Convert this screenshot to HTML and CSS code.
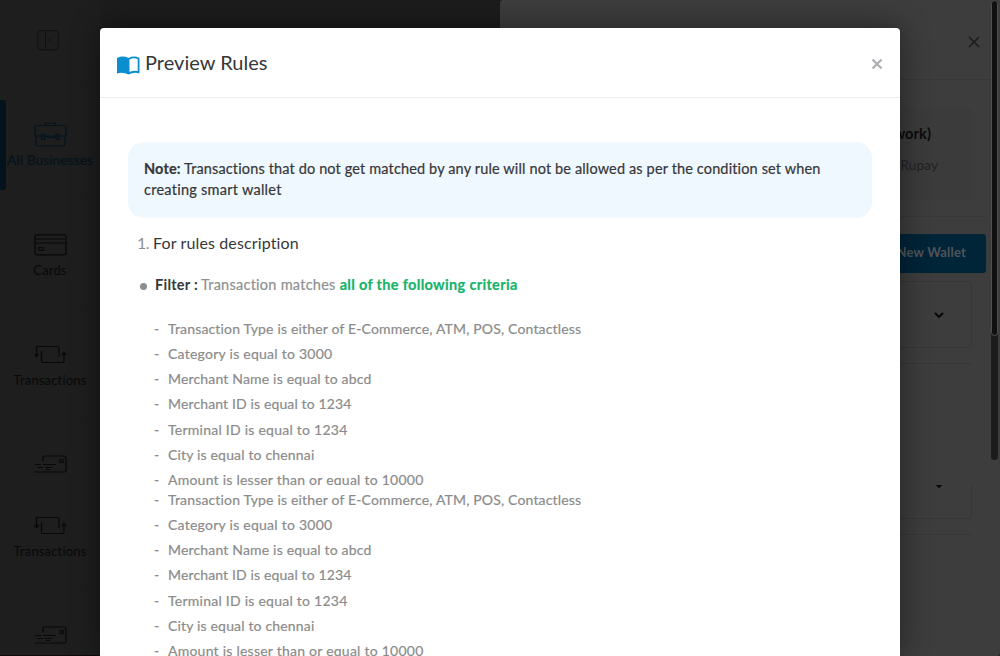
FILE: index.html
```html
<!DOCTYPE html>
<html lang="en">
<head>
<meta charset="utf-8">
<title>Preview Rules</title>
<link rel="stylesheet" href="styles.css">
</head>
<body>
<svg width="0" height="0" class="defs">
  <defs>
    <symbol id="swap" viewBox="0 0 33 20"><path d="M2.5 11V2.500Q2.500 1.500 3.500 1.500H23.500Q25 1.500 25 3V12M.5 9L2.500 11.500L4.700 9M7.500 6V16Q7.500 17.500 9 17.500H29Q30 17.500 30 16V7.500M27.800 10L30 7.500L32.300 10"/></symbol>
    <symbol id="card" viewBox="0 0 33 22"><rect x="1" y=".8" width="31" height="20" rx="2"/><path d="M1 5H32M1 9H32M5 13.500H9V16.500H5Z"/></symbol>
    <symbol id="mail" viewBox="0 0 33 18"><path d="M9 6V3Q9 1 11 1H30Q32 1 32 3V15.500Q32 17 30.500 17H.5M26 4.500H29V7.500H26ZM1 9.500H7M9 9.500H22M3.500 12.500H9M11 12.500H18M12 14.500H16"/></symbol>
  </defs>
</svg>
<div class="app">
  <nav class="sidebar">
    <div class="collapse"><svg width="22" height="21" viewBox="0 0 22 21"><rect x=".7" y=".7" width="20.6" height="19.2" rx="3"/><path d="M8.500 1V20M14 7.500L11.300 10L14 12.500"/></svg></div>
    <div class="nav-list">
      <div class="nav-item active">
        <svg width="33" height="25" viewBox="0 0 33 26" preserveAspectRatio="none"><path d="M11 3.500Q11 1 13 1H20Q22 1 22 3.500"/><rect x="1" y="3.600" width="31" height="11" rx="1.500"/><path d="M2 14V23Q2 25 4 25H29Q31 25 31 23V14M11 15Q16.500 17.500 22 15M7.500 12.500H10.500V18H7.500ZM22 12.500H25V18H22Z"/></svg>
        <span class="label label-wide">All Businesses</span>
      </div>
      <div class="nav-item"><svg class="icon-card" width="33" height="22"><use href="#card"/></svg><span class="label">Cards</span></div>
      <div class="nav-item"><svg class="icon-swap" width="33" height="20"><use href="#swap"/></svg><span class="label">Transactions</span></div>
      <div class="nav-item nav-cut"><svg width="33" height="18"><use href="#mail"/></svg></div>
    </div>
    <div class="nav-list nav-rest">
      <div class="nav-item nav-short"><svg class="icon-swap" width="33" height="20"><use href="#swap"/></svg><span class="label">Transactions</span></div>
      <div class="nav-item nav-cut"><svg width="33" height="18"><use href="#mail"/></svg></div>
    </div>
  </nav>
  <aside class="drawer">
    <div class="drawer-main">
      <header class="drawer-head"><svg width="12" height="12" viewBox="0 0 12 12"><path d="M1 1L11 11M11 1L1 11"/></svg></header>
      <div class="drawer-body">
        <div class="info"><span class="network">(Network)</span><span class="rupay">Rupay</span></div>
        <div class="action"><button class="new-wallet">New Wallet</button></div>
        <div class="panel"><svg width="10" height="7" viewBox="0 0 10 7"><path d="M1 1L5 5L9 1"/></svg></div>
        <div class="rule"></div>
        <div class="panel panel-end"><svg width="10" height="4" viewBox="0 3 10 4"><path d="M1 1L5 5L9 1"/></svg></div>
        <div class="rule"></div>
      </div>
    </div>
    <div class="scroll"><div class="thumb"></div></div>
  </aside>
</div>
<section class="modal">
  <header class="modal-head">
    <svg class="book" width="23" height="19" viewBox="0 0 23 19"><path class="book-fill" d="M0 2Q6 -.8 11.500 2Q17 -.8 22.500 2V17.500Q17 15.800 11.500 18.500Q6 15.800 0 17.500Z"/><path class="book-page" d="M12.500 3.400Q16.500 1.300 20.700 3V15Q16.500 14 12.500 16Z"/></svg>
    <h1 class="title">Preview Rules</h1>
    <svg class="close" width="12" height="12" viewBox="0 0 12 12"><path d="M1.500 1.500L10.500 10.500M10.500 1.500L1.500 10.500"/></svg>
  </header>
  <div class="modal-body">
    <p class="note"><span class="note-first"><b>Note:</b> Transactions that do not get matched by any rule will not be allowed as per the condition set when</span><br><span class="note-second">creating smart wallet</span></p>
    <h2 class="rule-title"><span class="num">1.</span><span class="rule-name">For rules description</span></h2>
    <div class="filter"><i class="dot"></i><span class="filter-key">Filter :</span><span class="muted">Transaction matches</span><b class="all">all of the following criteria</b></div>
    <ul class="criteria">
      <li class="type">Transaction Type is either of E-Commerce, ATM, POS, Contactless</li>
      <li class="category">Category is equal to 3000</li>
      <li class="merchant">Merchant Name is equal to abcd</li>
      <li class="merchant-id">Merchant ID is equal to 1234</li>
      <li class="terminal">Terminal ID is equal to 1234</li>
      <li class="city">City is equal to chennai</li>
      <li class="amount">Amount is lesser than or equal to 10000</li>
    </ul>
    <ul class="criteria criteria-more">
      <li class="type">Transaction Type is either of E-Commerce, ATM, POS, Contactless</li>
      <li class="category">Category is equal to 3000</li>
      <li class="merchant">Merchant Name is equal to abcd</li>
      <li class="merchant-id">Merchant ID is equal to 1234</li>
      <li class="terminal">Terminal ID is equal to 1234</li>
      <li class="city">City is equal to chennai</li>
      <li class="amount">Amount is lesser than or equal to 10000</li>
    </ul>
  </div>
</section>
</body>
</html>
```
FILE: styles.css
```css
* { box-sizing: border-box; }
body { margin: 0; width: 1000px; height: 656px; overflow: hidden; background: #1c1c1c; font-family: Lato, "Noto Sans", sans-serif; font-size: 14px; }
.defs { display: block; position: absolute; }
svg { fill: none; stroke: currentColor; display: block; }
.app { display: flex; justify-content: space-between; height: 656px; }
.sidebar { width: 100px; display: flex; flex-direction: column; background: #1e1e1e; color: #080808; border-bottom: 1px solid #120a10; }
.collapse { flex: none; height: 81px; padding: 30px 0 0 37px; color: #111; border-bottom: 1px solid #1c1c1c; }
.nav-list { flex: none; height: 404px; overflow: hidden; padding-top: 9px; }
.nav-rest { height: 170px; padding-top: 0; }
.nav-item { height: 110px; display: flex; flex-direction: column; align-items: center; justify-content: flex-end; padding-bottom: 29px; border-bottom: 1px solid #1c1c1c; position: relative; }
.nav-item svg { flex: none; stroke-width: 1.2; }
.nav-short { height: 106px; }
.nav-cut { justify-content: flex-start; padding-top: 35px; border-bottom: 0; }
.icon-card { margin-bottom: 1px; }
.icon-swap { margin-bottom: 2px; }
.label { font-size: 13px; line-height: 20px; letter-spacing: .16px; white-space: nowrap; margin-top: 3px; }
.label-wide { font-size: 13.5px; letter-spacing: .18px; -webkit-text-stroke: .2px; }
.active { color: #03141d; }
.active::before { content: ""; position: absolute; left: 0; top: 10px; width: 6px; height: 90px; background: #02131c; border-radius: 0 3px 3px 0; }
.drawer { width: 500px; background: #3d3d3d; border-radius: 3px 0 3px 0; display: flex; }
.drawer-main { width: 491px; }
.drawer-head { height: 80px; display: flex; justify-content: flex-end; padding: 36px 11px 0 0; border-bottom: 1px solid #373737; color: #1c1c1c; }
.drawer-head svg { stroke-width: 1.5; }
.drawer-body { padding: 28px 19px 0 0; }
.info { height: 92px; background: #3b3b3b; border-radius: 4px; display: flex; flex-direction: column; align-items: flex-end; padding: 16px 41px 0 0; line-height: 20px; }
.network { font-weight: 700; color: #0a0a0a; font-size: 14.5px; letter-spacing: .1px; }
.rupay { margin: 11px -7px 0 0; color: #202124; font-size: 13.5px; letter-spacing: .15px; }
.action { margin: 16px -14px 0 0; border-top: 1px solid #373737; padding-top: 17px; display: flex; justify-content: flex-end; }
.new-wallet { width: 150px; height: 39px; border: 0; border-radius: 3px; background: #002438; color: #505558; font: 700 13px Lato, sans-serif; letter-spacing: .2px; padding: 0 20px 4px 0; text-align: right; }
.panel { margin-top: 8px; height: 67px; border: 1px solid #363636; border-radius: 4px; padding: 30px 27px 0 0; display: flex; justify-content: flex-end; color: #050505; }
.panel svg { stroke-width: 1.8; }
.rule { height: 16px; border-bottom: 1px solid #373737; }
.panel-end { margin-top: 121px; height: 34px; border-top: 0; border-radius: 0 0 4px 4px; padding-top: 0; }
.scroll { width: 7px; height: 460px; background: #1c1c1c; border-radius: 4px; }
.thumb { height: 336px; background: #101010; border: 1px solid #505050; border-radius: 4px; }
.modal { position: absolute; left: 100px; top: 28px; width: 800px; height: 628px; background: #fff; border-radius: 4px 4px 0 0; box-shadow: 0 0 30px rgba(0,0,0,.45); }
.modal-head { height: 70px; border-bottom: 1px solid #eaebec; display: flex; align-items: flex-start; padding: 0 17px; }
.book { margin-top: 28px; stroke: none; }
.book-fill { fill: #0a8ed0; }
.book-page { fill: #fff; }
.title { margin: 21px 0 0 5px; font-size: 20px; line-height: 26px; font-weight: 400; letter-spacing: .02px; color: #363739; white-space: nowrap; }
.close { margin: 30px 0 0 auto; stroke: #adb0b5; stroke-width: 2.4; }
.modal-body { padding: 44px 28px 0; color: #363739; }
.note, .filter, .criteria { -webkit-text-stroke: .2px; }
.note { margin: 0; height: 76px; background: #f0f8ff; border-radius: 16px; padding: 16px; font-size: 14.5px; line-height: 21px; white-space: nowrap; }
.note-first { letter-spacing: .138px; }
.note-second { letter-spacing: .26px; }
.rule-title { margin: 14px 0 0 9px; display: flex; gap: 4px; font-size: 16px; line-height: 22px; font-weight: 400; }
.num { width: 12px; letter-spacing: -.5px; }
.rule-name { letter-spacing: .126px; }
.num, .muted { color: #909090; }
.filter { margin-top: 21px; display: flex; align-items: center; padding-left: 12px; font-size: 14.5px; line-height: 20px; white-space: nowrap; }
.dot { width: 7px; height: 7px; border-radius: 50%; background: #8d8d8d; margin: 2px 8px 0 0; }
.filter-key { width: 43px; font-weight: 700; letter-spacing: .25px; margin-right: 3px; -webkit-text-stroke: 0; }
.muted { letter-spacing: .26px; }
.all { color: #16b36b; letter-spacing: .324px; margin-left: 4px; }
.criteria { margin: 0; padding: 21px 0 0 26px; list-style: none; height: 190px; overflow: hidden; color: #8b8b8b; }
.criteria li { height: 25.17px; line-height: 25px; white-space: nowrap; display: flex; }
.criteria li::before { content: "-"; width: 14px; flex: none; }
.criteria-more { padding-top: 2px; height: 171px; }
.type { letter-spacing: .167px; }
.category { letter-spacing: .254px; }
.merchant { letter-spacing: .173px; }
.merchant-id { letter-spacing: .133px; }
.terminal { letter-spacing: .246px; }
.city { letter-spacing: .17px; }
.amount { letter-spacing: .24px; }
```
